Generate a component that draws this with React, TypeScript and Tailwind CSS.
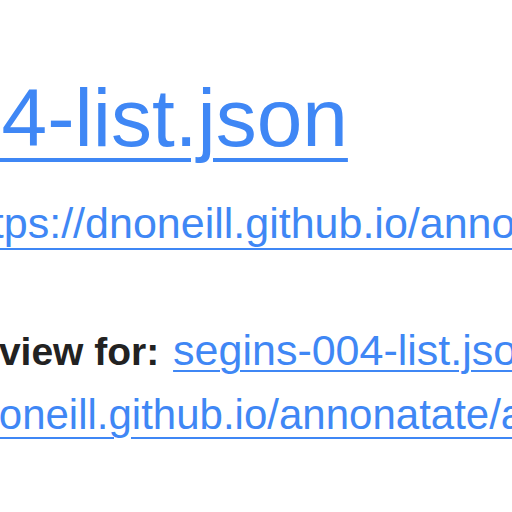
export default function App() {
  return (
    <div className="w-[512px] h-[512px] overflow-hidden bg-white font-['Liberation_Sans',Arial,sans-serif]">
      <h1 className="mt-[77px] ml-[-354px] whitespace-nowrap text-[82px] leading-[82px] font-normal">
        <a href="#" className="text-[#3f87f5] underline decoration-[4px] underline-offset-[12px]">
          segins-004-list.json
        </a>
      </h1>

      <p className="mt-[43px] ml-[-44px] whitespace-nowrap text-[43px] leading-[43px]">
        <a href="#" className="text-[#3f87f5] underline decoration-[2px] underline-offset-[10px]">
          https://dnoneill.github.io/annonatate/annotations/segins-004-list.json
        </a>
      </p>

      <div className="mt-[74px] whitespace-nowrap leading-[63px]">
        <div className="ml-[-64px] text-[42px]">
          <b className="text-[#222] text-[39px]">Preview for: </b>
          <a href="#" className="ml-[3px] text-[43px] text-[#3f87f5] underline decoration-[2px] underline-offset-[5px]">
            segins-004-list.json
          </a>
        </div>
        <div className="ml-[-174px] text-[42px]">
          <a href="#" className="text-[#3f87f5] underline decoration-[2px] underline-offset-[8px]">
            https://dnoneill.github.io/annonatate/annotations/segins-004-list.json
          </a>
        </div>
      </div>
    </div>
  )
}
